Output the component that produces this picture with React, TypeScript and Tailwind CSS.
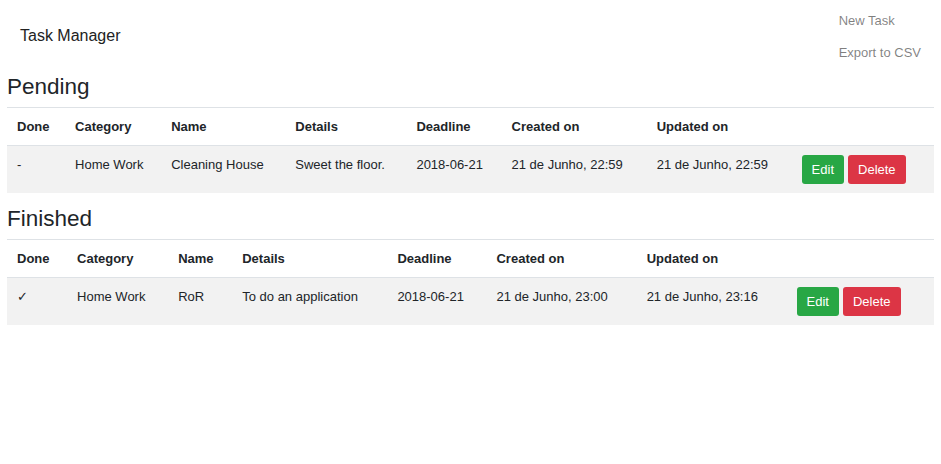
import React from "react";

type Task = {
  done: boolean;
  category: string;
  name: string;
  details: string;
  deadline: string;
  created: string;
  updated: string;
};

const pending: Task[] = [
  {
    done: false,
    category: "Home Work",
    name: "Cleaning House",
    details: "Sweet the floor.",
    deadline: "2018-06-21",
    created: "21 de Junho, 22:59",
    updated: "21 de Junho, 22:59",
  },
];

const finished: Task[] = [
  {
    done: true,
    category: "Home Work",
    name: "RoR",
    details: "To do an application",
    deadline: "2018-06-21",
    created: "21 de Junho, 23:00",
    updated: "21 de Junho, 23:16",
  },
];

const headers = ["Done", "Category", "Name", "Details", "Deadline", "Created on", "Updated on", ""];

function TaskTable({ tasks, widths }: { tasks: Task[]; widths: number[] }) {
  return (
    <table className="mb-[13px] w-full table-fixed border-collapse border-t border-[#dee2e6]">
      <colgroup>
        {widths.map((w, i) => (
          <col key={i} style={{ width: w }} />
        ))}
      </colgroup>
      <thead>
        <tr className="border-b border-[#dee2e6]">
          {headers.map((h, i) => (
            <th key={i} className="h-[37px] px-[10px] py-[9px] text-left align-top font-bold leading-[19px]">
              {h}
            </th>
          ))}
        </tr>
      </thead>
      <tbody>
        {tasks.map((t, i) => (
          <tr key={i} className="h-[47px] bg-[#f2f2f2]">
            <td className="px-[10px] py-[9px] align-top leading-[19px]">{t.done ? "✓" : "-"}</td>
            <td className="px-[10px] py-[9px] align-top leading-[19px]">{t.category}</td>
            <td className="px-[10px] py-[9px] align-top leading-[19px]">{t.name}</td>
            <td className="px-[10px] py-[9px] align-top leading-[19px]">{t.details}</td>
            <td className="px-[10px] py-[9px] align-top leading-[19px]">{t.deadline}</td>
            <td className="px-[10px] py-[9px] align-top leading-[19px]">{t.created}</td>
            <td className="px-[10px] py-[9px] align-top leading-[19px]">{t.updated}</td>
            <td className="px-[10px] py-[9px] align-top">
              <div className="flex gap-[4px]">
                <button className="flex h-[29px] w-[42px] items-center justify-center rounded-[3px] bg-[#28a745] text-white">
                  Edit
                </button>
                <button className="flex h-[29px] w-[58px] items-center justify-center rounded-[3px] bg-[#dc3545] text-white">
                  Delete
                </button>
              </div>
            </td>
          </tr>
        ))}
      </tbody>
    </table>
  );
}

export default function App() {
  return (
    <div className="min-h-screen bg-white px-[7px] font-['Liberation_Sans',Arial,sans-serif] text-[13px] leading-[1.5] text-[#212529]">
      <nav className="flex h-[74px] items-center justify-between pl-[13px] pr-[13px]">
        <span className="mb-[3px] text-[16px] text-[#222]">Task Manager</span>
        <div className="mb-[2px] flex flex-col">
          <a className="py-[6.5px] leading-[19px] text-black/50">New Task</a>
          <a className="py-[6.5px] leading-[19px] text-black/50">Export to CSV</a>
        </div>
      </nav>

      <h3 className="mb-[7px] text-[22.5px] font-normal leading-[26px]">Pending</h3>
      <TaskTable tasks={pending} widths={[58, 96, 124, 121, 95, 145, 145, 142]} />

      <h3 className="mb-[7px] text-[22.5px] font-normal leading-[26px]">Finished</h3>
      <TaskTable tasks={finished} widths={[60, 101, 64, 155, 99, 150, 150, 147]} />
    </div>
  );
}
